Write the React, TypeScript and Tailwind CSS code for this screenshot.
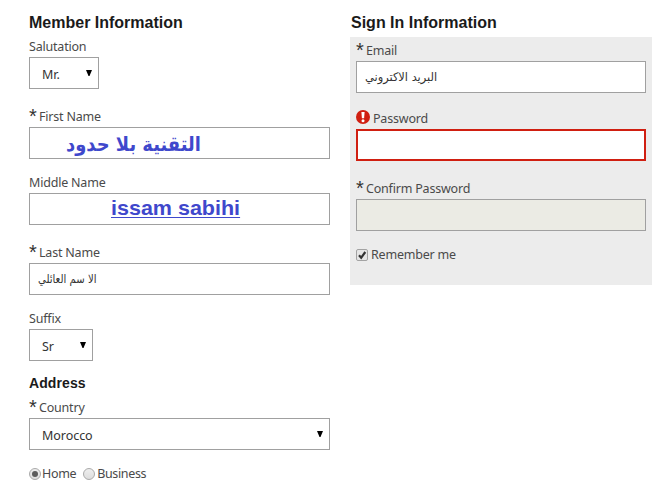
import React from 'react';

interface LabelProps {
  text: string;
  mark?: 'required' | 'error';
}

const Label: React.FC<LabelProps> = ({ text, mark }) => (
  <div className="flex h-5 items-center whitespace-nowrap">
    {mark === 'required' && (
      <span className="relative -top-px w-[10px] font-['Liberation_Sans',sans-serif] text-[20px] leading-5 text-[#333]">*</span>
    )}
    {mark === 'error' && (
      <svg className="relative -top-[2px] mr-[3px]" width="14" height="14" viewBox="0 0 14 14">
        <circle cx="7" cy="7" r="7" fill="#d01f11" />
        <path d="M5.4 2h3.2l-.5 6.2H5.9z" fill="#fff" />
        <circle cx="7" cy="10.7" r="1.5" fill="#fff" />
      </svg>
    )}
    <span>{text}</span>
  </div>
);

interface BoxProps {
  className?: string;
  children?: React.ReactNode;
}

const Box: React.FC<BoxProps> = ({ className = 'border border-[#a0a0a0] bg-white', children }) => (
  <div className={`flex h-8 items-center ${className}`}>{children}</div>
);

const Select: React.FC<{ value: string; className: string }> = ({ value, className }) => (
  <div className={`flex h-8 items-center justify-between border border-[#a0a0a0] bg-white pr-[6px] pl-3 tracking-[-0.05px] text-[#333] ${className}`}>
    <span className="relative top-[2px]">{value}</span>
    <svg width="6" height="6" viewBox="0 0 6 6">
      <path d="M0 0h6L3.5 6h-1z" fill="#000" />
    </svg>
  </div>
);

const Radio: React.FC<{ checked?: boolean }> = ({ checked }) => (
  <svg className="mr-px" width="12" height="12" viewBox="0 0 12 12">
    <defs>
      <linearGradient id="radioFill" x1="0" y1="0" x2="0" y2="1">
        <stop offset="0" stopColor="#efefef" />
        <stop offset="1" stopColor="#dcdcdc" />
      </linearGradient>
    </defs>
    <circle cx="6" cy="6" r="5.5" fill="url(#radioFill)" stroke="#aaa" />
    {checked && <circle cx="6" cy="6" r="3" fill="#5c5c5c" />}
  </svg>
);

const Heading: React.FC<{ children: React.ReactNode }> = ({ children }) => (
  <h2 className="relative top-px h-5 font-['Liberation_Sans',sans-serif] text-[16px] leading-5 font-bold tracking-normal whitespace-nowrap text-[#1a1a1a]">
    {children}
  </h2>
);

export default function App() {
  return (
    <main className="flex h-[494px] w-[668px] items-start overflow-hidden bg-white pt-3 pl-[29px] font-['Noto_Sans',sans-serif] text-[12.5px] leading-5 tracking-[-0.2px] text-[#4a4a4a]">
      <section className="w-[301px]">
        <Heading>Member Information</Heading>
        <div className="mt-[5px]">
          <Label text="Salutation" />
          <Select value="Mr." className="w-[70px]" />
        </div>
        <div className="mt-[18px]">
          <Label text="First Name" mark="required" />
          <Box>
            <span dir="rtl" className="relative top-px ml-[36px] origin-left scale-x-[0.895] font-['DejaVu_Sans',sans-serif] text-[20px] font-bold tracking-normal whitespace-nowrap text-[#3f48cc]">التقنية بلا حدود</span>
          </Box>
        </div>
        <div className="mt-[14px]">
          <Label text="Middle Name" />
          <Box>
            <span className="relative -top-px ml-[81px] origin-left scale-x-[1.024] font-['Liberation_Sans',sans-serif] text-[21px] font-bold tracking-normal whitespace-nowrap text-[#3f48cc] underline decoration-1 underline-offset-2">issam sabihi</span>
          </Box>
        </div>
        <div className="mt-[18px]">
          <Label text="Last Name" mark="required" />
          <Box>
            <span dir="rtl" className="ml-2 origin-left scale-x-[0.84] font-['DejaVu_Sans',sans-serif] text-[12px] tracking-normal whitespace-nowrap text-[#333]">الا سم العائلي</span>
          </Box>
        </div>
        <div className="mt-[14px]">
          <Label text="Suffix" />
          <Select value="Sr" className="w-16" />
        </div>
        <h3 className="mt-[12px] h-5 font-['Liberation_Sans',sans-serif] text-[14px] font-bold tracking-[0.1px] text-[#1a1a1a]">Address</h3>
        <div className="mt-[5px]">
          <Label text="Country" mark="required" />
          <Select value="Morocco" className="w-full" />
        </div>
        <div className="mt-[14px] flex h-5 items-center tracking-[-0.35px]">
          <Radio checked />
          <span className="mr-[7px]">Home</span>
          <Radio />
          <span className="ml-px">Business</span>
        </div>
      </section>

      <section className="ml-5 w-[302px]">
        <div className="pl-px">
          <Heading>Sign In Information</Heading>
        </div>
        <div className="mt-[5px] h-[248px] bg-[#ececec] px-[6px] pt-1">
          <Label text="Email" mark="required" />
          <Box>
            <span dir="rtl" className="ml-2 origin-left scale-x-[0.95] font-['DejaVu_Sans',sans-serif] text-[12px] tracking-normal whitespace-nowrap text-[#333]">البريد الاكتروني</span>
          </Box>
          <div className="mt-4">
            <Label text="Password" mark="error" />
            <Box className="border-2 border-[#d01f11] bg-white" />
          </div>
          <div className="mt-[18px]">
            <Label text="Confirm Password" mark="required" />
            <Box className="border border-[#a0a0a0] bg-[#ebebe4]" />
          </div>
          <div className="mt-[14px] flex h-5 items-center">
            <svg className="mr-[2px]" width="13" height="13" viewBox="0 0 13 13">
              <rect x=".5" y=".5" width="11" height="11" rx="1.5" fill="#e6e6e6" stroke="#a3a3a3" />
              <path d="M3 6.2l2.2 2.5L9.3 3" fill="none" stroke="#333" strokeWidth="2.2" />
            </svg>
            <span>Remember me</span>
          </div>
        </div>
      </section>
    </main>
  );
}
